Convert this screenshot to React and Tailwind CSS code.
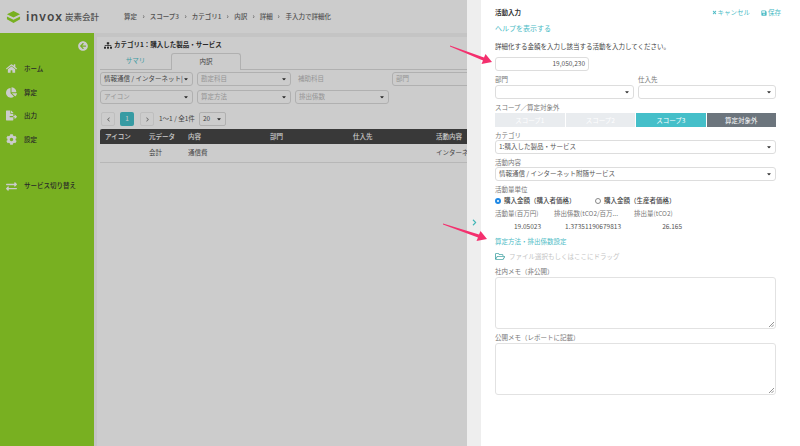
import React from "react";
import { FaHome, FaChartPie, FaFileExport, FaCog, FaExchangeAlt, FaSitemap, FaArrowCircleLeft, FaTimes, FaSave, FaRegFolderOpen, FaChevronLeft, FaChevronRight, FaCaretDown } from "react-icons/fa";

const font = { fontFamily: '"Noto Sans CJK JP", "Noto Sans", sans-serif' };

function Caret({ className = "text-[#333]" }) {
  return <FaCaretDown className={`w-[6px] h-[6px] shrink-0 ${className}`} />;
}

function Sel({ text, w, muted, grow, h = "h-[14px]" }) {
  return (
    <div className={`${w || ""} ${grow ? "flex-1" : ""} ${h} shrink-0 flex items-center justify-between rounded-[3px] border border-[#ddd] bg-white px-[3px] text-[6.5px] ${muted ? "text-[#bbb]" : "text-[#555]"}`}>
      <span className="truncate">{text}</span>
      <Caret />
    </div>
  );
}

function NavItem({ icon: Icon, label, cls = "" }) {
  return (
    <div className={`h-[23.6px] flex items-center pl-[2px] ${cls}`}>
      <span className="w-[19px] flex justify-center text-white"><Icon className="w-[11px] h-[11px]" /></span>
      <span className="ml-[3px] text-[6.5px] font-medium text-[#333]">{label}</span>
    </div>
  );
}

function Label({ children, cls = "" }) {
  return <div className={`text-[6.5px] leading-[9px] text-[#777] ${cls}`}>{children}</div>;
}

function Crumb({ children, last }) {
  return (
    <>
      <span>{children}</span>
      {!last && <FaChevronRight className="w-[3.5px] h-[3.5px] mx-[4.6px] text-[#777]" />}
    </>
  );
}

function Memo({ cls = "" }) {
  return (
    <div className={`relative w-[281px] rounded-[3px] border border-[#e2e2e2] bg-white ${cls}`}>
      <svg viewBox="0 0 6 6" className="absolute right-[1px] bottom-[1px] w-[6px] h-[6px]" stroke="#666" strokeWidth="0.7">
        <path d="M1 6 L6 1 M3.5 6 L6 3.5" />
      </svg>
    </div>
  );
}

const cols = [
  ["アイコン", "w-[44px]"],
  ["元データ", "w-[39px]"],
  ["内容", "w-[82px]"],
  ["部門", "w-[83px]"],
  ["仕入先", "w-[83px]"],
  ["活動内容", "w-[60px]"],
];

function Left() {
  return (
    <div className="relative w-[467px] h-[446px] shrink-0 overflow-hidden bg-[#f5f5f5]">
      <div className="w-[520px] h-full flex flex-col">
        <header className="h-[33px] shrink-0 bg-white flex items-center pl-[6px]">
          <svg viewBox="0 0 16 14" className="w-[15px] h-[14px]">
            <path d="M8 0.5 L15 4 L8 7.5 L1 4 Z" fill="#96dc2a" />
            <path d="M1 6.5 L8 10 L15 6.5 L15 9.5 L8 13.5 L1 9.5 Z" fill="#96dc2a" />
          </svg>
          <span className="ml-[5px] text-[12px] font-semibold tracking-[1.1px] text-[#555]" style={{ fontFamily: '"Noto Sans", sans-serif' }}>invox</span>
          <span className="ml-[2px] text-[8.5px] font-medium text-[#666]">炭素会計</span>
          <nav className="ml-[25px] flex items-center text-[6.5px] font-medium text-[#666]">
            <Crumb>算定</Crumb><Crumb>スコープ3</Crumb><Crumb>カテゴリ1</Crumb><Crumb>内訳</Crumb><Crumb>詳細</Crumb><Crumb last>手入力で詳細化</Crumb>
          </nav>
        </header>
        <div className="flex-1 flex min-h-0">
          <aside className="w-[94px] shrink-0 bg-[#96dc2a] flex flex-col">
            <div className="h-[24px] pt-[8px] flex items-start justify-end pr-[6px] text-white"><FaArrowCircleLeft className="w-[10px] h-[10px]" /></div>
            <div>
              <NavItem icon={FaHome} label="ホーム" />
              <NavItem icon={FaChartPie} label="算定" />
              <NavItem icon={FaFileExport} label="出力" />
              <NavItem icon={FaCog} label="設定" />
            </div>
            <NavItem icon={FaExchangeAlt} label="サービス切り替え" cls="mt-[23px]" />
          </aside>
          <main className="flex-1 ml-[3px] mt-[4px] bg-white pl-[3px] text-[#555]">
            <div className="h-[16px] flex items-center pl-[4px] text-[6.5px] font-bold text-[#333]">
              <FaSitemap className="w-[8px] h-[7px] mr-[2px]" />カテゴリ1：購入した製品・サービス
            </div>
            <div className="h-[17px] flex text-[6.5px] border-b border-[#ddd]">
              <div className="w-[71px] flex items-center justify-center text-[#4dc3cc]">サマリ</div>
              <div className="w-[70px] flex items-center justify-center border border-b-0 border-[#ddd] rounded-t-[3px] -mb-px bg-white">内訳</div>
            </div>
            <div className="mt-[2px] flex gap-[4px]">
              <Sel text="情報通信 / インターネット|" w="w-[93px]" />
              <Sel text="勘定科目" w="w-[94px]" muted />
              <div className="w-[93px] h-[14px] px-[3px] flex items-center text-[6.5px] text-[#bbb]">補助科目</div>
              <div className="w-[100px] h-[14px] px-[3px] flex items-center rounded-[3px] border border-[#ddd] text-[6.5px] text-[#bbb]">部門</div>
            </div>
            <div className="mt-[4px] flex gap-[4px]">
              <Sel text="アイコン" w="w-[93px]" muted />
              <Sel text="算定方法" w="w-[94px]" muted />
              <Sel text="排出係数" w="w-[94px]" muted />
            </div>
            <div className="mt-[8px] h-[14px] flex items-center text-[6.5px]">
              <div className="ml-[1px] w-[14px] h-[14px] flex items-center justify-center rounded-[2px] border border-[#eee] text-[#888]"><FaChevronLeft className="w-[5px] h-[5px]" /></div>
              <div className="ml-[5px] w-[14px] h-[14px] flex items-center justify-center rounded-[2px] bg-[#45c2cc] text-white">1</div>
              <div className="ml-[6px] w-[14px] h-[14px] flex items-center justify-center rounded-[2px] border border-[#eee] text-[#888]"><FaChevronRight className="w-[5px] h-[5px]" /></div>
              <span className="ml-[5px] w-[40px] whitespace-nowrap">1〜1 / 全1件</span>
              <div className="w-[27px] h-[14px] flex items-center justify-between rounded-[2px] border border-[#ddd] px-[3px]">20<Caret /></div>
            </div>
            <div className="mt-[3px] h-[15px] bg-[#484848] rounded-t-[2px] flex items-center pl-[5px] text-[6.5px] text-white font-medium">
              {cols.map(([t, w]) => <div key={t} className={`${w} shrink-0`}>{t}</div>)}
            </div>
            <div className="h-[19px] border-b border-[#e5e5e5] flex items-center pl-[5px] text-[6.5px]">
              <div className="w-[44px] shrink-0" />
              <div className="w-[39px] shrink-0">会計</div>
              <div className="w-[82px] shrink-0">通信費</div>
              <div className="w-[83px] shrink-0" />
              <div className="w-[83px] shrink-0" />
              <div className="w-[60px] shrink-0 whitespace-nowrap">インターネット</div>
            </div>
          </main>
        </div>
      </div>
      <div className="absolute inset-0 bg-black/20" />
    </div>
  );
}

function Panel() {
  return (
    <div className="flex-1 bg-white pl-[14px] pr-[24px] text-[#555]">
      <div className="h-[24px] pt-[1px] flex items-center justify-between text-[6.5px]">
        <span className="font-bold text-[#333]">活動入力</span>
        <div className="flex items-center text-[#4dbcc6] mr-[-5px]">
          <FaTimes className="w-[5px] h-[5px] mr-[1px]" /><span>キャンセル</span>
          <FaSave className="w-[6px] h-[6px] ml-[11px] mr-[1px]" /><span>保存</span>
        </div>
      </div>
      <div className="h-[9px] text-[7px] leading-[9px] text-[#4dbcc6]">ヘルプを表示する</div>
      <div className="mt-[9px] h-[9px] text-[6.5px] leading-[9px] whitespace-nowrap text-[#444]">詳細化する金額を入力し該当する活動を入力してください。</div>
      <div className="mt-[6px] w-[94px] h-[14px] rounded-[3px] border border-[#ddd] flex items-center justify-end pr-[3px] text-[6.5px]">19,050,230</div>
      <div className="mt-[4px] flex gap-[4px]"><Label cls="w-[139px]">部門</Label><Label>仕入先</Label></div>
      <div className="mt-[1px] flex gap-[4px] w-[281px]"><Sel w="w-[139px]" text="" /><Sel w="w-[138px]" text="" /></div>
      <Label cls="mt-[4px]">スコープ／算定対象外</Label>
      <div className="mt-[1px] w-[281px] h-[14px] flex gap-px text-[6.5px] text-center leading-[14px]">
        <div className="flex-1 bg-[#e9ecef] text-white">スコープ1</div>
        <div className="flex-1 bg-[#e9ecef] text-white">スコープ2</div>
        <div className="flex-1 bg-[#45bfc9] text-white">スコープ3</div>
        <div className="flex-1 bg-[#6c757d] text-white">算定対象外</div>
      </div>
      <Label cls="mt-[4px]">カテゴリ</Label>
      <div className="w-[281px]"><Sel w="w-[281px]" text="1:購入した製品・サービス" /></div>
      <Label cls="mt-[4px]">活動内容</Label>
      <div className="w-[281px]"><Sel w="w-[281px]" text="情報通信 / インターネット附随サービス" /></div>
      <Label cls="mt-[4px]">活動量単位</Label>
      <div className="mt-[2px] h-[9px] flex items-center text-[6.5px] font-medium text-[#444]">
        <span className="w-[6px] h-[6px] rounded-full bg-white border-[2px] border-[#1e88e5] mr-[3px]" />
        <span className="w-[82px]">購入金額（購入者価格）</span>
        <span className="ml-[9px] w-[6px] h-[6px] rounded-full border border-[#888] mr-[3px]" />
        <span>購入金額（生産者価格）</span>
      </div>
      <div className="mt-[4px] h-[9px] flex text-[6.5px] leading-[9px] text-[#777]">
        <span className="w-[59px]">活動量(百万円)</span>
        <span className="w-[80px]">排出係数(tCO2/百万...</span>
        <span>排出量(tCO2)</span>
      </div>
      <div className="mt-[4px] h-[9px] flex text-[6.5px] leading-[9px] text-[#555]">
        <span className="w-[46px] text-right">19.05023</span>
        <span className="w-[80px] text-right">1.37351190679813</span>
        <span className="w-[61px] text-right">26.165</span>
      </div>
      <div className="mt-[6px] h-[9px] text-[6.5px] leading-[9px] text-[#4dbcc6]">算定方法・排出係数設定</div>
      <div className="mt-[6px] h-[9px] flex items-center text-[6.5px] text-[#c4c4c4]">
        <FaRegFolderOpen className="w-[10px] h-[9px] mr-[4px] text-[#4aa7a7]" />ファイル選択もしくはここにドラッグ
      </div>
      <Label cls="mt-[6px]">社内メモ（非公開）</Label>
      <Memo cls="mt-[1px] h-[52px]" />
      <Label cls="mt-[4px]">公開メモ（レポートに記載）</Label>
      <Memo cls="mt-[1px] h-[52px]" />
    </div>
  );
}

export default function App() {
  return (
    <div className="relative w-[800px] h-[446px] flex overflow-hidden bg-white" style={font}>
      <Left />
      <div className="w-[14px] shrink-0 bg-[#eeeeee] flex items-start justify-center pt-[219px] text-[#3fb6b6]">
        <FaChevronRight className="w-[5px] h-[7px]" />
      </div>
      <Panel />
      <svg className="absolute inset-0 pointer-events-none" width="800" height="446" viewBox="0 0 800 446">
        <g fill="#f4306e">
          <path d="M450 45.6 L450 46.4 L483 60.5 L481.5 64 L492 62 L485.5 54 L484 57.5 Z" />
          <path d="M443 223.6 L443 224.4 L478 237.5 L476.5 241 L487 239 L480.5 231 L479 234.5 Z" />
        </g>
      </svg>
    </div>
  );
}
